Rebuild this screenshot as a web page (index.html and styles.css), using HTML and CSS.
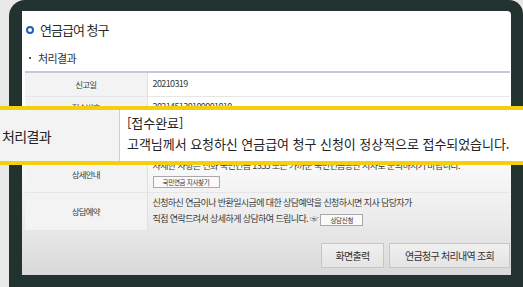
FILE: index.html
```html
<!DOCTYPE html>
<html lang="ko">
<head>
  <meta charset="UTF-8">
  <title>연금급여 청구</title>
  <link rel="stylesheet" href="styles.css">
</head>
<body>
  <div class="frame">
    <div class="screen">
      <h1 class="title"><span class="ring"></span>연금급여 청구</h1>
      <h2 class="sub"><span class="dot"></span>처리결과</h2>
      <table class="info">
        <tr class="r-date"><th>신고일</th><td>20210319</td></tr>
        <tr class="r-no"><th>접수번호</th><td>202145130100001010</td></tr>
        <!-- 처리결과 row sits under the highlighted callout -->
        <tr class="r-result"><th></th><td></td></tr>
        <tr class="r-guide">
          <th>상세안내</th>
          <td>
            <p>자세한 사항은 전화 국민연금 1355 또는 가까운 국민연금공단 지사로 문의하시기 바랍니다.</p>
            <button class="mini mini-wide">국민연금 지사찾기</button>
          </td>
        </tr>
        <tr class="r-book">
          <th>상담예약</th>
          <td>
            <p>신청하신 연금이나 반환일시금에 대한 상담예약을 신청하시면 지사 담당자가</p>
            <p>직접 연락드려서 상세하게 상담하여 드립니다. ☞ <button class="mini">상담신청</button></p>
          </td>
        </tr>
      </table>
      <div class="actions">
        <button class="btn btn-print">화면출력</button>
        <button class="btn btn-history">연금청구 처리내역 조회</button>
      </div>
    </div>
  </div>

  <div class="callout">
    <div class="callout-label">처리결과</div>
    <div class="callout-text">
      <p>[접수완료]</p>
      <p>고객님께서 요청하신 연금급여 청구 신청이 정상적으로 접수되었습니다.</p>
    </div>
  </div>
</body>
</html>
```

FILE: styles.css
```css
* { margin: 0; padding: 0; box-sizing: border-box; }
body {
  width: 523px;
  height: 287px;
  overflow: hidden;
  position: relative;
  background: #e8e8e8;
  font-family: 'Noto Sans CJK KR', 'Noto Sans', sans-serif;
  color: #333;
}
.frame {
  margin-left: 9px;
  height: 287px;
  background: #22322f;
  border-radius: 16px 14px 0 0;
  padding: 11px 12px 12px 13px;
}
.screen {
  height: 264px;
  padding: 0 1px 0 3px;
  border-radius: 0 4px 0 0;
  background: linear-gradient(to bottom, #ffffff 0%, #ffffff 50%, #ececec 78%, #d9d9d9 100%);
}
.title {
  display: flex;
  align-items: center;
  padding-top: 12px;
  height: 26px;
  font-size: 13px;
  line-height: 14px;
  font-weight: 400;
  letter-spacing: -1px;
  color: #2b2b2b;
}
.ring {
  width: 8px;
  height: 8px;
  border: 2px solid #1b5fb6;
  border-radius: 50%;
  margin: 0 6px 0 1px;
}
.sub {
  display: flex;
  align-items: center;
  margin-top: 14px;
  height: 14px;
  font-size: 11px;
  font-weight: 400;
  letter-spacing: -0.6px;
  color: #333;
}
.dot {
  width: 2px;
  height: 2px;
  background: #555;
  margin: 0 7px 0 4px;
}
.info {
  margin-top: 6px;
  width: 485px;
  border-collapse: collapse;
  font-size: 9px;
  letter-spacing: -0.6px;
  color: #3a3a3a;
}
.info tr { border-bottom: 1px solid #e6e6e6; }
.info tr.r-date { border-top: 2px solid #c9c5dc; }
.info th {
  width: 122px;
  background: #f3f3f3;
  border-right: 1px solid #e0e0e0;
  font-size: 8.5px;
  font-weight: 400;
  letter-spacing: -0.8px;
  text-align: center;
}
.info td {
  padding-left: 5px;
  line-height: 16px;
}
.r-date { height: 24px; }
.r-no { height: 22px; }
.r-result { height: 37px; }
.r-guide { height: 37px; }
.r-book { height: 38px; }
.mini {
  font-family: inherit;
  font-size: 6.5px;
  letter-spacing: -0.3px;
  height: 12px;
  width: 43px;
  background: #fafafa;
  border: 1px solid #a9a9a9;
  color: #333;
  vertical-align: middle;
}
.mini-wide { width: 67px; }
.actions {
  display: flex;
  justify-content: flex-end;
  gap: 5px;
  margin-top: 12px;
}
.btn {
  height: 25px;
  font-family: inherit;
  font-size: 10px;
  letter-spacing: -0.7px;
  color: #333;
  background: linear-gradient(to bottom, #f0f0f0, #e4e4e4);
  border: 1px solid #c6c6c6;
}
.btn-print { width: 63px; }
.btn-history { width: 121px; }
.callout {
  position: absolute;
  left: 0;
  top: 106px;
  width: 523px;
  height: 59px;
  display: flex;
  background: #fff;
  border-top: 4px solid #f4d00c;
  border-bottom: 4px solid #f4d00c;
  color: #222;
}
.callout-label {
  width: 120px;
  display: flex;
  align-items: center;
  padding-left: 2px;
  background: #f3f3f3;
  border-right: 1px solid #cfcfcf;
  font-size: 14px;
  letter-spacing: -0.6px;
}
.callout-text {
  padding: 2px 0 0 7px;
  font-size: 13px;
  line-height: 21px;
  letter-spacing: -0.05px;
}
```
